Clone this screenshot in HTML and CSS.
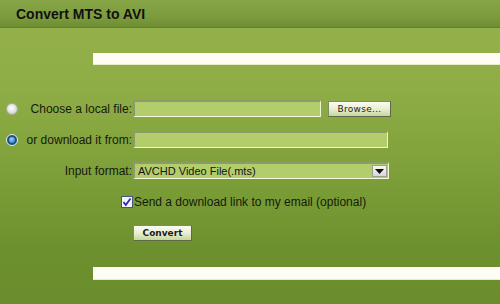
FILE: index.html
```html
<!DOCTYPE html>
<html>
<head>
  <title>Convert MTS to AVI</title>
  <meta charset="UTF-8">
  <link rel="stylesheet" href="styles.css">
</head>
<body>
<div class="header">
  <h1>Convert MTS to AVI</h1>
</div>

<div class="rule rule-top"></div>

<form class="converter">
  <span class="radio"></span>
  <label class="label label-first">Choose a local file:</label>
  <div class="field-group">
    <span class="field field-file"></span>
    <span class="btn btn-browse">Browse...</span>
  </div>

  <span class="radio radio-on"><span class="radio-dot"></span></span>
  <label class="label">or download it from:</label>
  <span class="field field-url"></span>

  <span></span>
  <label class="label">Input format:</label>
  <div class="select">
    <span class="select-text">AVCHD Video File(.mts)</span>
    <span class="select-arrow">
      <svg width="9" height="5" viewBox="0 0 9 5"><path d="M0 0h9L4.5 5z" fill="#111"/></svg>
    </span>
  </div>

  <span></span>
  <span></span>
  <div class="check-row">
    <span class="checkbox">
      <svg width="10" height="10" viewBox="0 0 10 10"><path d="M1.5 5l2.3 3L8.5 1.5" fill="none" stroke="#2b2fa8" stroke-width="1.8"/></svg>
    </span>
    <span class="check-text">Send a download link to my email (optional)</span>
  </div>

  <span></span>
  <span></span>
  <div class="actions">
    <span class="btn btn-convert">Convert</span>
  </div>
</form>

<div class="rule rule-bottom"></div>
</body>
</html>
```

FILE: styles.css
```css
body {
  margin: 0;
  width: 500px;
  height: 304px;
  overflow: hidden;
  font-family: "Liberation Sans", Arial, sans-serif;
  color: #161a0c;
  background: linear-gradient(to bottom, #95b14b 0px, #8fad46 90px, #7c9e38 180px, #6d902e 250px, #6b8d2d 304px);
}

.header {
  height: 27px;
  padding-left: 16px;
  display: flex;
  align-items: center;
  background: linear-gradient(to bottom, #86a546 0%, #7d9c3e 60%, #6f8d33 100%);
  border-bottom: 1px solid #62802a;
}

h1 {
  margin: 0;
  font-size: 14px;
  font-weight: bold;
  color: #111;
  padding-top: 1px;
}

.rule {
  margin-left: 93px;
  height: 12px;
  background: #fdfdf6;
  border-bottom: 1px solid #e8ecc8;
  box-sizing: border-box;
}

.rule-top {
  margin-top: 25px;
}

.rule-bottom {
  margin-top: 26px;
  height: 13px;
}

.converter {
  margin: 35px 0 0 0;
  padding-left: 6px;
  display: grid;
  grid-template-columns: 12px 115px 1fr;
  grid-auto-rows: 17px;
  row-gap: 14px;
  align-items: center;
}

.radio {
  width: 12px;
  height: 12px;
  border-radius: 50%;
  box-sizing: border-box;
  border: 1px solid #a9b098;
  background: radial-gradient(circle at 45% 40%, #ffffff 0%, #e2e2e2 50%, #b9bbb4 100%);
  display: flex;
  align-items: center;
  justify-content: center;
}

.radio-on {
  border: 1px solid #e6eef4;
  background: #1d4f86;
}

.radio-dot {
  width: 6px;
  height: 6px;
  border-radius: 50%;
  background: radial-gradient(circle at 40% 35%, #9fd2f2 0%, #3f8fd0 70%);
}

.label {
  font-size: 12px;
  text-align: right;
  padding-right: 1px;
  white-space: nowrap;
}

.field-group {
  display: flex;
  align-items: center;
  gap: 7px;
}

.field {
  display: block;
  height: 17px;
  box-sizing: border-box;
  background: #b3cc6c;
  border-top: 2px solid #8c9a6e;
  border-left: 2px solid #8c9a6e;
  border-right: 1px solid #eef3d2;
  border-bottom: 1px solid #f4f7de;
}

.field-file {
  width: 188px;
}

.field-url {
  width: 255px;
}

.btn {
  display: flex;
  align-items: center;
  justify-content: center;
  box-sizing: border-box;
  font-family: "DejaVu Sans", Tahoma, sans-serif;
  font-size: 9px;
  color: #1b1b1b;
  background: linear-gradient(to bottom, #fbfcf4 0%, #e9efd2 50%, #c6d79a 100%);
  border: 1px solid #7f8b68;
  border-right-color: #5e6a48;
  border-bottom-color: #5e6a48;
}

.btn-browse {
  width: 63px;
  height: 16px;
  letter-spacing: 0.3px;
}

.btn-convert {
  width: 59px;
  height: 16px;
  font-weight: bold;
  font-size: 9px;
  margin-top: 1px;
}

.select {
  width: 256px;
  height: 17px;
  box-sizing: border-box;
  display: flex;
  align-items: center;
  justify-content: space-between;
  background: #b3cc6c;
  border-top: 2px solid #8c9a6e;
  border-left: 2px solid #8c9a6e;
  border-right: 1px solid #eef3d2;
  border-bottom: 1px solid #f4f7de;
  padding: 0 1px 0 3px;
}

.select-text {
  font-size: 11px;
  color: #141414;
}

.select-arrow {
  width: 15px;
  height: 12px;
  box-sizing: border-box;
  display: flex;
  align-items: center;
  justify-content: center;
  background: linear-gradient(to bottom, #f6f6f6, #d8d8dc);
  border: 1px solid #9aa08a;
}

.check-row {
  display: flex;
  align-items: center;
  margin-left: -12px;
  gap: 1px;
}

.checkbox {
  width: 12px;
  height: 12px;
  box-sizing: border-box;
  border: 1px solid #4a5480;
  background: #f4f4fa;
  display: flex;
  align-items: center;
  justify-content: center;
}

.check-text {
  font-size: 12px;
}

.actions {
  display: flex;
}
```
